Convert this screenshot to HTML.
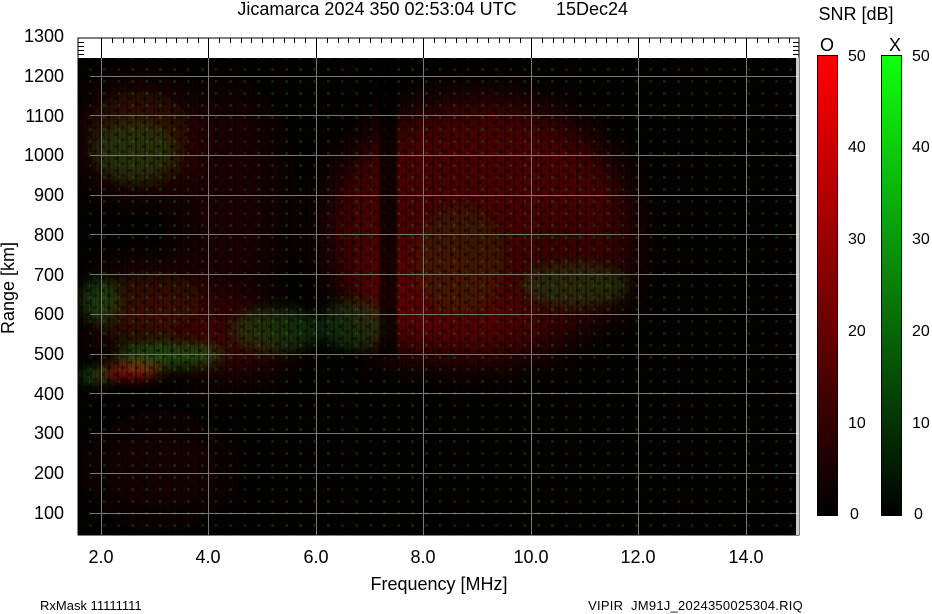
<!DOCTYPE html>
<html><head><style>
body{margin:0;background:#fff;width:932px;height:614px;overflow:hidden;font-family:"Liberation Sans",sans-serif}
svg{position:absolute;left:0;top:0}
</style></head><body>
<svg width="932" height="614" xmlns="http://www.w3.org/2000/svg">
<defs>
<filter id="b" x="-50%" y="-50%" width="200%" height="200%"><feGaussianBlur stdDeviation="18"/></filter>
<filter id="b2" x="-50%" y="-50%" width="200%" height="200%"><feGaussianBlur stdDeviation="7"/></filter>
<linearGradient id="rg" x1="0" y1="1" x2="0" y2="0"><stop offset="0" stop-color="#000"/><stop offset="1" stop-color="#f00"/></linearGradient>
<linearGradient id="gg" x1="0" y1="1" x2="0" y2="0"><stop offset="0" stop-color="#000"/><stop offset="1" stop-color="#1f1"/></linearGradient>
<pattern id="vs" width="9" height="10" patternUnits="userSpaceOnUse"><rect x="0" width="2" height="10" fill="#000" opacity=".35"/><rect x="5" width="1" height="10" fill="#000" opacity=".2"/></pattern>
<pattern id="sp" width="14" height="12" patternUnits="userSpaceOnUse"><rect x="2" y="1" width="4" height="3" fill="#000" opacity=".4"/><rect x="9" y="6" width="4" height="3" fill="#000" opacity=".35"/><rect x="5" y="8" width="3" height="3" fill="#2a8a20" opacity=".25"/></pattern>
<clipPath id="pc"><rect x="78" y="58" width="721" height="477"/></clipPath>
</defs>
<text x="377" y="15" font-size="18" text-anchor="middle">Jicamarca 2024 350 02:53:04 UTC</text>
<text x="592" y="15" font-size="18" text-anchor="middle">15Dec24</text>
<rect x="78" y="38" width="721" height="497" fill="#fff" stroke="#000"/>
<rect x="78" y="58" width="721" height="477" fill="#050101"/>
<g clip-path="url(#pc)">
<g filter="url(#b)">
<ellipse cx="480" cy="230" rx="150" ry="130" fill="#4a0505"/>
<ellipse cx="430" cy="300" rx="80" ry="55" fill="#5a0606"/>
<ellipse cx="570" cy="270" rx="60" ry="55" fill="#3a0404"/>
<ellipse cx="140" cy="140" rx="55" ry="50" fill="#3a0806"/>
<ellipse cx="150" cy="310" rx="60" ry="40" fill="#3a0806"/>
<ellipse cx="230" cy="340" rx="60" ry="30" fill="#440606"/>
<ellipse cx="160" cy="470" rx="70" ry="50" fill="#140303"/>
<ellipse cx="230" cy="200" rx="50" ry="110" fill="#1a0303"/>
</g>
<g filter="url(#b2)">
<ellipse cx="135" cy="150" rx="40" ry="30" fill="#1a5a10" opacity=".45"/>
<ellipse cx="100" cy="300" rx="20" ry="22" fill="#1a6a10" opacity=".5"/>
<ellipse cx="170" cy="355" rx="55" ry="12" fill="#1a7a10" opacity=".6"/>
<ellipse cx="275" cy="330" rx="45" ry="22" fill="#1a5a10" opacity=".5"/>
<ellipse cx="355" cy="325" rx="35" ry="25" fill="#1a5a10" opacity=".45"/>
<ellipse cx="575" cy="285" rx="55" ry="22" fill="#1a5a10" opacity=".45"/>
<ellipse cx="460" cy="260" rx="45" ry="55" fill="#1a4a10" opacity=".3"/>
<ellipse cx="130" cy="372" rx="30" ry="5" fill="#c01010"/>
<ellipse cx="92" cy="376" rx="14" ry="3" fill="#2aa020"/>
</g>
<rect x="78" y="58" width="721" height="477" fill="url(#sp)"/>
<rect x="78" y="58" width="721" height="477" fill="url(#vs)"/>
<rect x="380" y="58" width="16" height="300" fill="#000" opacity=".7"/>
</g>
<g stroke="#777" stroke-width="1" fill="none">
<path d="M101.5 38V535M208.5 38V535M316.5 38V535M423.5 38V535M531.5 38V535M638.5 38V535M746.5 38V535"/>
<path d="M90 513.5H799M90 473.5H799M90 433.5H799M90 393.5H799M90 354.5H799M90 314.5H799M90 274.5H799M90 234.5H799M90 195.5H799M90 155.5H799M90 115.5H799M90 76.5H799"/>
</g>
<g stroke="#000" stroke-width="1">
<path d="M101.5 38v20M208.5 38v20M316.5 38v20M423.5 38v20M531.5 38v20M638.5 38v20M746.5 38v20"/>
<path d="M112.5 38v5M123.5 38v5M133.5 38v5M144.5 38v5M155.5 38v5M166.5 38v5M176.5 38v5M187.5 38v5M198.5 38v5M219.5 38v5M230.5 38v5M241.5 38v5M251.5 38v5M262.5 38v5M273.5 38v5M284.5 38v5M294.5 38v5M305.5 38v5M327.5 38v5M338.5 38v5M348.5 38v5M359.5 38v5M370.5 38v5M381.5 38v5M391.5 38v5M402.5 38v5M413.5 38v5M434.5 38v5M445.5 38v5M456.5 38v5M466.5 38v5M477.5 38v5M488.5 38v5M499.5 38v5M509.5 38v5M520.5 38v5M542.5 38v5M553.5 38v5M563.5 38v5M574.5 38v5M585.5 38v5M596.5 38v5M606.5 38v5M617.5 38v5M628.5 38v5M649.5 38v5M660.5 38v5M671.5 38v5M681.5 38v5M692.5 38v5M703.5 38v5M714.5 38v5M724.5 38v5M735.5 38v5M757.5 38v5M768.5 38v5M778.5 38v5M789.5 38v5"/>
<path d="M78 42.5h6M78 46.5h6M78 50.5h6M78 54.5h6M793 42.5h6M793 46.5h6M793 50.5h6M793 54.5h6"/>
</g>
<rect x="796" y="58" width="3" height="477" fill="#fff" opacity=".8"/>
<g font-size="18" text-anchor="end">
<text x="64" y="42">1300</text><text x="64" y="82">1200</text><text x="64" y="122">1100</text><text x="64" y="161">1000</text><text x="64" y="201">900</text><text x="64" y="241">800</text><text x="64" y="281">700</text><text x="64" y="320">600</text><text x="64" y="360">500</text><text x="64" y="400">400</text><text x="64" y="439">300</text><text x="64" y="479">200</text><text x="64" y="519">100</text>
</g>
<g font-size="18" text-anchor="middle">
<text x="101" y="563">2.0</text><text x="208" y="563">4.0</text><text x="316" y="563">6.0</text><text x="423" y="563">8.0</text><text x="531" y="563">10.0</text><text x="638" y="563">12.0</text><text x="746" y="563">14.0</text>
<text x="439" y="590">Frequency [MHz]</text>
</g>
<text x="14" y="288" font-size="18" text-anchor="middle" transform="rotate(-90 14 288)">Range [km]</text>
<text x="40" y="610" font-size="13">RxMask 11111111</text>
<text x="803" y="610" font-size="13" text-anchor="end" style="white-space:pre" letter-spacing="0.25">VIPIR  JM91J_2024350025304.RIQ</text>
<text x="856" y="20" font-size="18" text-anchor="middle">SNR [dB]</text>
<text x="827" y="51" font-size="18" text-anchor="middle">O</text>
<text x="895" y="51" font-size="18" text-anchor="middle">X</text>
<rect x="817.5" y="55.5" width="20" height="460" fill="url(#rg)" stroke="#000"/>
<rect x="881.5" y="55.5" width="20" height="460" fill="url(#gg)" stroke="#000"/>
<g font-size="16" fill="#000">
<text x="848" y="61">50</text><text x="848" y="152">40</text><text x="848" y="244">30</text><text x="848" y="336">20</text><text x="848" y="428">10</text><text x="850" y="519">0</text>
<text x="912" y="61">50</text><text x="912" y="152">40</text><text x="912" y="244">30</text><text x="912" y="336">20</text><text x="912" y="428">10</text><text x="914" y="519">0</text>
</g>
</svg>
</body></html>
